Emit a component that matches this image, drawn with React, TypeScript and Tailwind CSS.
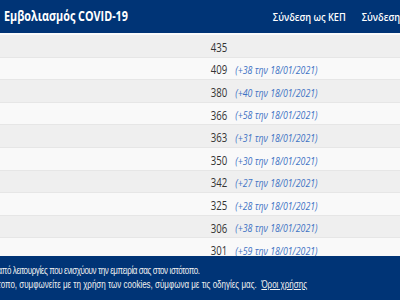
import { FC } from 'react';

const rows = [
  { n: 435, d: null },
  { n: 409, d: 38 },
  { n: 380, d: 40 },
  { n: 366, d: 58 },
  { n: 363, d: 31 },
  { n: 350, d: 30 },
  { n: 342, d: 27 },
  { n: 325, d: 28 },
  { n: 306, d: 38 },
  { n: 301, d: 59 },
  { n: 290, d: 41 },
];

// the page is laid out at 500px and squeezed to the 400px window
const App: FC = () => {
  return (
    <div className="h-[300px] w-[400px] overflow-hidden bg-[#f9f9f9]">
      <div className="relative h-[300px] w-[500px] origin-top-left scale-x-[0.8] font-['Open_Sans',sans-serif]">
        <div className="flex h-[33px] items-center whitespace-nowrap bg-[#003476] pl-[5px] text-white">
          <span className="w-[336px] shrink-0 text-[13.5px] font-bold">Εμβολιασμός COVID-19</span>
          <div className="flex shrink-0 gap-[20px] text-[11.5px] font-semibold">
            <span>Σύνδεση ως ΚΕΠ</span>
            <span>Σύνδεση ως ΚΕΠ</span>
          </div>
        </div>
        <div className="h-[2px] bg-[#fbfbfb]" />

        <div>
          {rows.map((r, i) => (
            <div
              key={r.n}
              className={`flex h-[22.6px] items-center border-b border-[#e6e6e6] pt-[4px] ${
                i % 2 === 0 ? 'bg-[#efefef]' : 'bg-[#f9f9f9]'
              }`}
            >
              <span className="w-[284px] text-right text-[12px] text-[#333]">{r.n}</span>
              {r.d !== null && (
                <span className="ml-[10px] text-[11px] italic text-[#3d72c4]">
                  (+{r.d} την 18/01/2021)
                </span>
              )}
            </div>
          ))}
        </div>

        <div className="absolute bottom-0 left-0 flex h-[44px] w-[500px] flex-col justify-center bg-[#003476] font-['Liberation_Sans',Arial,sans-serif] text-[10px] leading-[14px] text-[#f0f0f0] whitespace-nowrap">
          <div className="ml-[-3px] tracking-[-0.5px]">από λειτουργίες που ενισχύουν την εμπειρία σας στον ιστότοπο.</div>
          <div className="ml-[-3px]">
            τοπο, συμφωνείτε με τη χρήση των cookies, σύμφωνα με τις οδηγίες μας.{' '}
            <span className="ml-[3px] underline">Όροι χρήσης</span>
          </div>
        </div>
      </div>
    </div>
  );
};

export default App;
